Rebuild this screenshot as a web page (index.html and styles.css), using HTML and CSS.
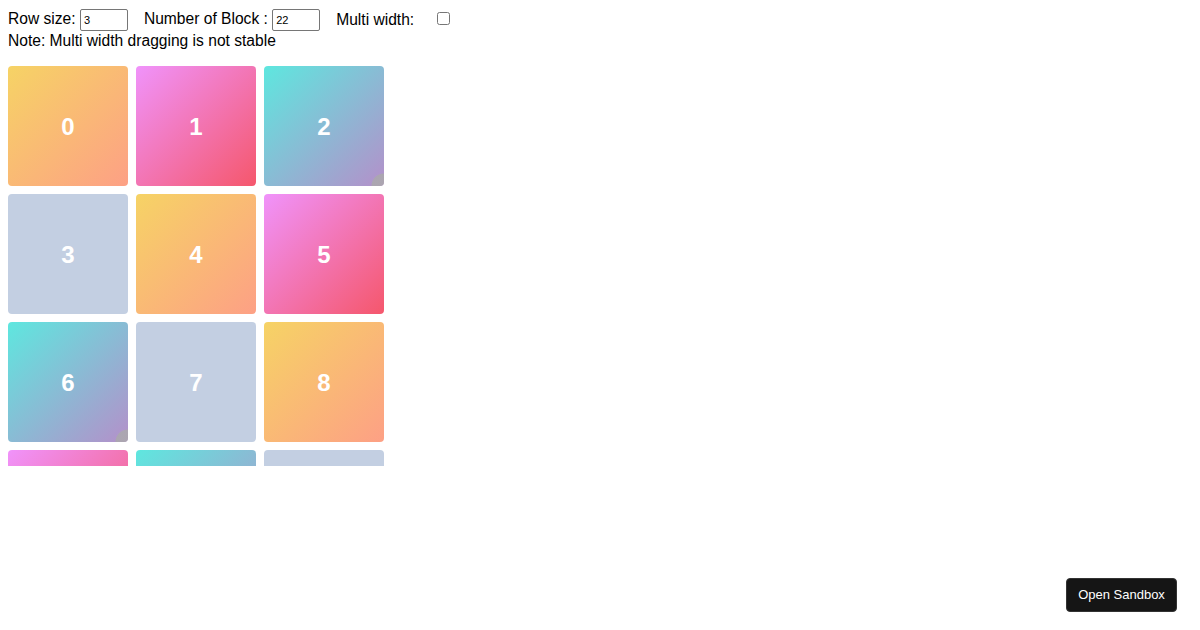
FILE: index.html
```html
<!DOCTYPE html>
<html>
<head>
  <title>Drag Grid</title>
  <link rel="stylesheet" href="styles.css">
</head>
<body>
  <div class="controls">
    <label class="field">Row size: <input type="number" id="rowSize" value="3"></label>
    <label class="field">Number of Block : <input type="number" id="blockCount" value="22"></label>
    <label class="field">Multi width: <input type="checkbox" id="multiWidth"></label>
  </div>
  <div class="note">Note: Multi width dragging is not stable</div>

  <div class="board">
    <div class="grid" id="grid"></div>
  </div>

  <button class="sandbox">Open Sandbox</button>

  <script>
    var colors = ['orange', 'pink', 'teal', 'grey'];
    var grid = document.getElementById('grid');
    var count = parseInt(document.getElementById('blockCount').value);

    for (var i = 0; i < count; i++) {
      var block = document.createElement('div');
      block.className = 'block ' + colors[i % 4];
      block.innerHTML = i;
      // only some blocks show the resize corner
      if (i == 2 || i == 6) {
        var corner = document.createElement('span');
        corner.className = 'corner';
        block.appendChild(corner);
      }
      grid.appendChild(block);
    }
  </script>
</body>
</html>
```

FILE: styles.css
```css
body {
  margin: 8px;
  font-family: "Liberation Sans", Arial, sans-serif;
  font-size: 15.6px;
  color: #000;
}
.controls {
  display: flex;
  align-items: center;
  height: 24px;
}
.field {
  margin-right: 16px;
}
.field input[type="number"] {
  width: 48px;
  height: 22px;
  box-sizing: border-box;
  padding: 1px 3px;
  font-size: 11px;
  font-family: "Liberation Sans", Arial, sans-serif;
  border: 1px solid #767676;
  border-radius: 2px;
  vertical-align: middle;
}
.field input[type="checkbox"] {
  margin: 0 0 0 18px;
  width: 13px;
  height: 13px;
  vertical-align: middle;
  position: relative;
  top: -2px;
}
.note {
  line-height: 18px;
  margin-bottom: 16px;
}
.board {
  height: 400px;
  overflow: hidden;
}
.grid {
  display: grid;
  grid-template-columns: repeat(3, 120px);
  grid-auto-rows: 120px;
  gap: 8px;
}
.block {
  position: relative;
  display: flex;
  align-items: center;
  justify-content: center;
  border-radius: 4px;
  color: #fff;
  font-size: 24px;
  font-weight: bold;
  padding-top: 2px;
  box-sizing: border-box;
}
.orange {
  background: linear-gradient(135deg, #f6d365 0%, #fda085 100%);
}
.pink {
  background: linear-gradient(135deg, #f093fb 0%, #f5576c 100%);
}
.teal {
  background: linear-gradient(135deg, #5ee7df 0%, #b490ca 100%);
}
.grey {
  background: #c3cfe2;
}
.corner {
  position: absolute;
  right: 0;
  bottom: 0;
  width: 16px;
  height: 14px;
  border-bottom-right-radius: 4px;
  background: radial-gradient(circle at 100% 100%, rgba(170, 170, 170, 0.8) 0, rgba(170, 170, 170, 0.8) 12px, transparent 13px);
}
.sandbox {
  position: fixed;
  right: 23px;
  bottom: 18px;
  width: 111px;
  height: 34px;
  padding: 0 0 2px;
  background: #151515;
  color: #fff;
  border: 1px solid #333;
  border-radius: 4px;
  font-family: "Liberation Sans", Arial, sans-serif;
  font-size: 13px;
  cursor: pointer;
}
```
